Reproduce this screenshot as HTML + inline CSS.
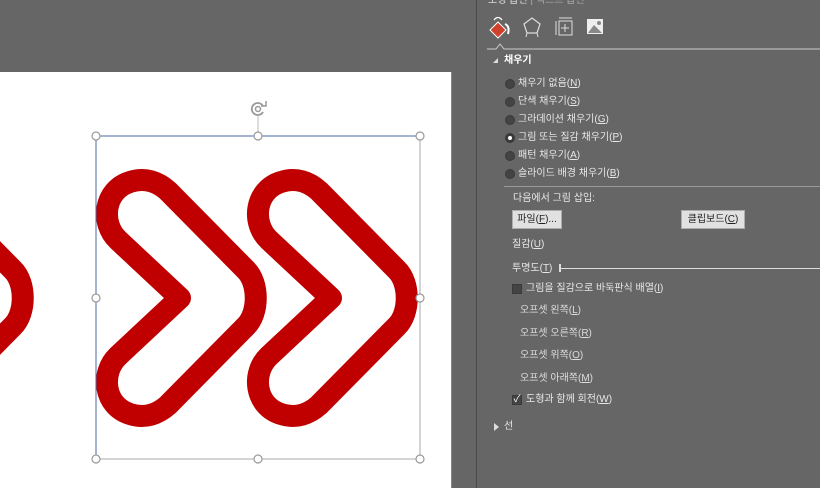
<!DOCTYPE html>
<html><head><meta charset="utf-8"><style>
*{margin:0;padding:0;box-sizing:border-box}
body{width:820px;height:488px;background:#666;position:relative;overflow:hidden;font-family:"Liberation Sans","Noto Sans CJK KR",sans-serif;color:#e8e8e8;font-size:10px}
.t{position:absolute;white-space:nowrap;line-height:12px}
.r{position:absolute;width:10px;height:10px;border-radius:50%;background:#444;border:1px solid #3a3a3a}
.btn{position:absolute;background:#e1e1e1;border:1px solid #adadad;color:#222;font-size:10px;line-height:17px;text-align:center}
u{text-decoration:underline}
</style></head><body>
<div style="position:absolute;left:0;top:72px;width:451px;height:416px;background:#fff"></div>
<div style="position:absolute;left:451px;top:72px;width:1px;height:416px;background:#888"></div>
<div style="position:absolute;left:476px;top:0;width:1px;height:488px;background:#4a4a4a"></div>
<svg style="position:absolute;left:0;top:0" width="452" height="488">
<defs><path id="c" d="M180,298 L118,240 C100,223 104,190 130,182 C145,177 158,182 168,191 L246,270 C259,283 259,313 246,326 L168,405 C158,414 145,419 130,414 C104,406 100,373 118,356 Z" fill="none" stroke="#c00000" stroke-width="22" stroke-linejoin="round"/></defs>
<use href="#c" transform="translate(-233,0)"/>
<use href="#c"/>
<use href="#c" transform="translate(151,0)"/>
<line x1="258" y1="116" x2="258" y2="136" stroke="#bbb"/>
<rect x="96" y="136" width="324" height="323" fill="none" stroke="#aaa"/>
<line x1="96" y1="136" x2="420" y2="136" stroke="#4a6aa0"/>
<line x1="96" y1="136" x2="96" y2="459" stroke="#4a6aa0"/>
<g fill="#fff" stroke="#999" stroke-width="1.2">
<circle cx="96" cy="136" r="4"/><circle cx="258" cy="136" r="4"/><circle cx="420" cy="136" r="4"/>
<circle cx="96" cy="298" r="4"/><circle cx="420" cy="298" r="4"/>
<circle cx="96" cy="459" r="4"/><circle cx="258" cy="459" r="4"/><circle cx="420" cy="459" r="4"/>
</g>
<path d="M263,106 A6,6 0 1 0 263,112" fill="none" stroke="#999" stroke-width="1.8"/>
<circle cx="258" cy="109" r="2.5" fill="none" stroke="#999" stroke-width="1.5"/>
<path d="M261,106 L266,106 L266,101" fill="none" stroke="#999" stroke-width="1.5"/>
</svg>
<div class="t" style="left:488px;top:-5px;color:#ddd">도형 옵션 <span style="color:#aaa">| 텍스트 옵션</span></div>
<svg style="position:absolute;left:486px;top:12px" width="334" height="40">
<path d="M12,10 L20,18 L12,26 L4,18 Z" fill="#d0402a" stroke="#fff" stroke-width="1"/>
<path d="M8,8 Q12,3 16,8" fill="none" stroke="#fff" stroke-width="1.3"/>
<path d="M19,12 Q24,14 22,22" fill="none" stroke="#fff" stroke-width="2"/>
<path d="M46,6 L54,12 L51,21 L41,21 L38,12 Z" fill="none" stroke="#ddd" stroke-width="1.2"/>
<path d="M41,21 L40,25 M51,21 L52,25" stroke="#ddd"/>
<rect x="73" y="9" width="13" height="14" fill="none" stroke="#ddd"/>
<path d="M70,9 L70,23 M73,6 L86,6 M79,12 L79,20 M75,16 L83,16" stroke="#ddd" fill="none"/>
<rect x="101" y="7" width="16" height="15" fill="#eee"/>
<path d="M102,21 L108,13 L116,21 Z" fill="#888"/><circle cx="113" cy="11" r="2" fill="#888"/>
<path d="M1,37 L10,37 L14,32 L18,37 L334,37" fill="none" stroke="#ccc"/>
</svg>
<div style="position:absolute;left:493px;top:58px;width:0;height:0;border-left:5px solid transparent;border-bottom:5px solid #ddd"></div>
<div class="t" style="left:504px;top:55px;font-weight:bold;color:#fff">채우기</div>
<div class="r" style="left:505px;top:79px"></div><div class="t" style="left:518px;top:78px">채우기 없음(<u>N</u>)</div>
<div class="r" style="left:505px;top:97px"></div><div class="t" style="left:518px;top:96px">단색 채우기(<u>S</u>)</div>
<div class="r" style="left:505px;top:115px"></div><div class="t" style="left:518px;top:114px">그라데이션 채우기(<u>G</u>)</div>
<div class="r" style="left:505px;top:133px;background:#fff;border:3px solid #3a3a3a"></div><div class="t" style="left:518px;top:132px">그림 또는 질감 채우기(<u>P</u>)</div>
<div class="r" style="left:505px;top:151px"></div><div class="t" style="left:518px;top:150px">패턴 채우기(<u>A</u>)</div>
<div class="r" style="left:505px;top:169px"></div><div class="t" style="left:518px;top:168px">슬라이드 배경 채우기(<u>B</u>)</div>
<div style="position:absolute;left:504px;top:186px;width:316px;height:1px;background:#999"></div>
<div class="t" style="left:513px;top:193px">다음에서 그림 삽입:</div>
<div class="btn" style="left:512px;top:210px;width:50px;height:19px">파일(<u>F</u>)...</div>
<div class="btn" style="left:681px;top:210px;width:64px;height:19px">클립보드(<u>C</u>)</div>
<div class="t" style="left:512px;top:239px">질감(<u>U</u>)</div>
<div class="t" style="left:512px;top:263px">투명도(<u>T</u>)</div>
<div style="position:absolute;left:559px;top:268px;width:261px;height:1px;background:#ddd"></div>
<div style="position:absolute;left:559px;top:264px;width:2px;height:8px;background:#ddd"></div>
<div style="position:absolute;left:512px;top:284px;width:10px;height:10px;background:#444;border:1px solid #3a3a3a"></div>
<div class="t" style="left:526px;top:283px">그림을 질감으로 바둑판식 배열(<u>I</u>)</div>
<div class="t" style="left:520px;top:305px;color:#ddd">오프셋 왼쪽(<u>L</u>)</div>
<div class="t" style="left:520px;top:328px;color:#ddd">오프셋 오른쪽(<u>R</u>)</div>
<div class="t" style="left:520px;top:350px;color:#ddd">오프셋 위쪽(<u>O</u>)</div>
<div class="t" style="left:520px;top:373px;color:#ddd">오프셋 아래쪽(<u>M</u>)</div>
<div style="position:absolute;left:512px;top:395px;width:10px;height:10px;background:#444;border:1px solid #3a3a3a;color:#fff;font-size:10px;line-height:8px;text-align:center">✓</div>
<div class="t" style="left:526px;top:394px">도형과 함께 회전(<u>W</u>)</div>
<div style="position:absolute;left:494px;top:423px;width:0;height:0;border-top:4px solid transparent;border-bottom:4px solid transparent;border-left:5px solid #ddd"></div>
<div class="t" style="left:504px;top:421px">선</div>
</body></html>
